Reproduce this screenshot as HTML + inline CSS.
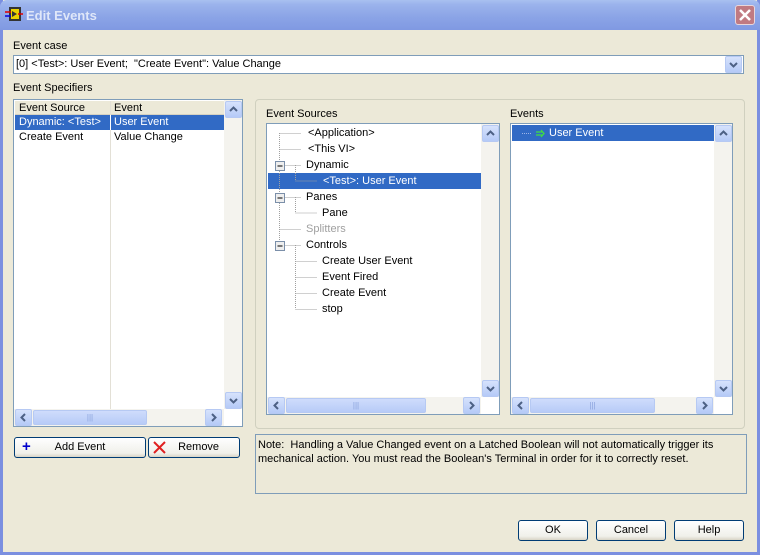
<!DOCTYPE html>
<html><head><meta charset="utf-8"><style>
*{margin:0;padding:0;box-sizing:border-box}
body{width:760px;height:555px;overflow:hidden;font-family:"Liberation Sans",Tahoma,sans-serif;font-size:11px;color:#000;position:relative;background:#ece9d8}
.a{position:absolute}
.frame{left:0;top:0;width:760px;height:555px;background:#ece9d8;border:3px solid #7b8fe0;border-top:none}
.title{left:0;top:0;width:760px;height:30px;background:linear-gradient(#a8c0f0 0%,#9bb3ec 15%,#8aa3e6 60%,#8099e2 100%);border-radius:7px 7px 0 0}
.ttext{left:26px;top:8px;font-size:13px;font-weight:bold;color:#dfe7f9}
.close{left:735px;top:5px;width:20px;height:20px;background:#c07a82;border:1px solid #e8d6da;border-radius:3px}
.box{background:#fff;border:1px solid #7f9db9}
.sel{background:#316ac5;color:#fff}
.sbv{background:#f4f3ee}
.btnS{width:17px;height:17px;background:linear-gradient(#d6e2fc,#b5caf7);border:1px solid #b6c9f3;border-radius:2px}
.btnS svg{position:absolute;left:3px;top:3px}
.thumbH{height:15px;background:linear-gradient(#cfdcfc,#b7cbf7);border:1px solid #b6c9f3;border-radius:2px;color:#8aa2dc;text-align:center;line-height:13px;font-size:8px}
.btn{height:21px;border:1px solid #003c74;border-radius:3px;background:linear-gradient(#fff,#f0f0ea 80%,#d8d4c6);text-align:center;line-height:19px}
.row{height:16px;line-height:16px;white-space:nowrap}
</style></head><body>
<div class="a frame"></div>
<div class="a title"></div>
<svg class="a" style="left:5px;top:5px" width="18" height="18"><rect x="4" y="2" width="12" height="14" fill="#333"/><rect x="6" y="4" width="8" height="10" fill="#e8d000"/><path d="M7 6l5 3-5 3z" fill="#333"/><line x1="0" y1="7" x2="6" y2="7" stroke="#d00" stroke-width="1.5"/><line x1="0" y1="11" x2="6" y2="11" stroke="#00d" stroke-width="1.5"/><line x1="13" y1="9" x2="18" y2="9" stroke="#d00" stroke-width="1.5"/></svg>
<div class="a ttext">Edit Events</div>
<div class="a close"><svg width="18" height="18"><path d="M4 4L14 14M14 4L4 14" stroke="#fff" stroke-width="2.5"/></svg></div>

<div class="a" style="left:13px;top:40px">Event case</div>
<div class="a box" style="left:13px;top:55px;width:731px;height:19px"><div style="padding:2px 0 0 2px">[0] &lt;Test&gt;: User Event;&nbsp; "Create Event": Value Change</div>
<div class="a btnS" style="right:1px;top:0px"><svg width="9" height="9"><path d="M1 3L4.5 6.5L8 3" stroke="#4d6185" stroke-width="2" fill="none"/></svg></div></div>

<div class="a" style="left:13px;top:82px">Event Specifiers</div>
<div class="a box" style="left:13px;top:99px;width:230px;height:328px">
 <div class="a" style="left:1px;top:1px;width:209px;height:14px;background:#ece9d8;border-bottom:1px solid #d6d2c2"></div>
 <div class="a" style="left:96px;top:1px;width:1px;height:308px;background:#e3e0d6"></div>
 <div class="a" style="left:5px;top:1px;line-height:14px">Event Source</div>
 <div class="a" style="left:100px;top:1px;line-height:14px">Event</div>
 <div class="a sel" style="left:1px;top:15px;width:209px;height:15px"></div>
 <div class="a" style="left:96px;top:15px;width:1px;height:15px;background:#fff"></div>
 <div class="a" style="left:5px;top:15px;line-height:15px;color:#fff">Dynamic: &lt;Test&gt;</div>
 <div class="a" style="left:100px;top:15px;line-height:15px;color:#fff">User Event</div>
 <div class="a" style="left:5px;top:30px;line-height:15px">Create Event</div>
 <div class="a" style="left:100px;top:30px;line-height:15px">Value Change</div>
 <div class="a sbv" style="left:210px;top:0;width:18px;height:309px"></div>
 <div class="a btnS" style="left:211px;top:1px"><svg width="9" height="9"><path d="M1 6L4.5 2.5L8 6" stroke="#4d6185" stroke-width="2" fill="none"/></svg></div>
 <div class="a btnS" style="left:211px;top:292px"><svg width="9" height="9"><path d="M1 3L4.5 6.5L8 3" stroke="#4d6185" stroke-width="2" fill="none"/></svg></div>
 <div class="a sbv" style="left:0;top:309px;width:210px;height:17px"></div>
 <div class="a btnS" style="left:1px;top:309px"><svg width="9" height="9"><path d="M6 1L2.5 4.5L6 8" stroke="#4d6185" stroke-width="2" fill="none"/></svg></div>
 <div class="a thumbH" style="left:19px;top:310px;width:114px">|||</div>
 <div class="a btnS" style="left:191px;top:309px"><svg width="9" height="9"><path d="M3 1L6.5 4.5L3 8" stroke="#4d6185" stroke-width="2" fill="none"/></svg></div>
</div>

<div class="a btn" style="left:14px;top:437px;width:132px"><span class="a" style="left:7px;top:-1px;color:#00c;font-size:15px;font-weight:bold">+</span>Add Event</div>
<div class="a btn" style="left:148px;top:437px;width:92px"><svg class="a" style="left:4px;top:3px" width="13" height="13"><path d="M1 1L12 12M12 1L1 12" stroke="#e02020" stroke-width="2"/></svg>&nbsp;&nbsp;&nbsp;Remove</div>

<div class="a" style="left:255px;top:99px;width:490px;height:330px;border:1px solid #d0d0bf;border-radius:4px"></div>
<div class="a" style="left:266px;top:108px">Event Sources</div>
<div class="a box" style="left:266px;top:123px;width:234px;height:292px">
 <div class="a sel" style="left:1px;top:49px;width:213px;height:16px"></div>
 <svg class="a" style="left:0;top:0" width="215" height="200"><g stroke="#a0a0a0" stroke-dasharray="1,1" fill="none">
 <path d="M12.5 9V121M12.5 9.5H34M12.5 25.5H34M12.5 41.5H34M12.5 73.5H34M12.5 105.5H34M12.5 121.5H34M28.5 41V57H50M28.5 73V89H50M28.5 121V185M28.5 137.5H50M28.5 153.5H50M28.5 169.5H50M28.5 185.5H50"/></g>
 <g><rect x="8.5" y="37.5" width="9" height="9" fill="#eee" stroke="#7b8fa9"/><path d="M10.5 42H15.5" stroke="#000"/>
 <rect x="8.5" y="69.5" width="9" height="9" fill="#eee" stroke="#7b8fa9"/><path d="M10.5 74H15.5" stroke="#000"/>
 <rect x="8.5" y="117.5" width="9" height="9" fill="#eee" stroke="#7b8fa9"/><path d="M10.5 122H15.5" stroke="#000"/></g></svg>
 <div class="a row" style="left:41px;top:1px">&lt;Application&gt;</div>
 <div class="a row" style="left:41px;top:17px">&lt;This VI&gt;</div>
 <div class="a row" style="left:39px;top:33px">Dynamic</div>
 <div class="a row" style="left:56px;top:49px;color:#fff">&lt;Test&gt;: User Event</div>
 <div class="a row" style="left:39px;top:65px">Panes</div>
 <div class="a row" style="left:55px;top:81px">Pane</div>
 <div class="a row" style="left:39px;top:97px;color:#a0a0a0">Splitters</div>
 <div class="a row" style="left:39px;top:113px">Controls</div>
 <div class="a row" style="left:55px;top:129px">Create User Event</div>
 <div class="a row" style="left:55px;top:145px">Event Fired</div>
 <div class="a row" style="left:55px;top:161px">Create Event</div>
 <div class="a row" style="left:55px;top:177px">stop</div>
 <div class="a sbv" style="left:214px;top:0;width:18px;height:273px"></div>
 <div class="a btnS" style="left:215px;top:1px"><svg width="9" height="9"><path d="M1 6L4.5 2.5L8 6" stroke="#4d6185" stroke-width="2" fill="none"/></svg></div>
 <div class="a btnS" style="left:215px;top:256px"><svg width="9" height="9"><path d="M1 3L4.5 6.5L8 3" stroke="#4d6185" stroke-width="2" fill="none"/></svg></div>
 <div class="a sbv" style="left:0;top:273px;width:214px;height:17px"></div>
 <div class="a btnS" style="left:1px;top:273px"><svg width="9" height="9"><path d="M6 1L2.5 4.5L6 8" stroke="#4d6185" stroke-width="2" fill="none"/></svg></div>
 <div class="a thumbH" style="left:19px;top:274px;width:140px">|||</div>
 <div class="a btnS" style="left:196px;top:273px"><svg width="9" height="9"><path d="M3 1L6.5 4.5L3 8" stroke="#4d6185" stroke-width="2" fill="none"/></svg></div>
</div>

<div class="a" style="left:510px;top:108px">Events</div>
<div class="a box" style="left:510px;top:123px;width:223px;height:292px">
 <div class="a sel" style="left:1px;top:1px;width:202px;height:16px"></div>
 <svg class="a" style="left:10px;top:1px" width="30" height="16"><path d="M1 8.5H11" stroke="#9db5e8" stroke-dasharray="1,1"/><path d="M15 7H22M15 10H22M20 5L23 8.5L20 12" stroke="#40e040" stroke-width="1.3" fill="none"/></svg>
 <div class="a row" style="left:38px;top:1px;color:#fff">User Event</div>
 <div class="a sbv" style="left:203px;top:0;width:18px;height:273px"></div>
 <div class="a btnS" style="left:204px;top:1px"><svg width="9" height="9"><path d="M1 6L4.5 2.5L8 6" stroke="#4d6185" stroke-width="2" fill="none"/></svg></div>
 <div class="a btnS" style="left:204px;top:256px"><svg width="9" height="9"><path d="M1 3L4.5 6.5L8 3" stroke="#4d6185" stroke-width="2" fill="none"/></svg></div>
 <div class="a sbv" style="left:0;top:273px;width:203px;height:17px"></div>
 <div class="a btnS" style="left:1px;top:273px"><svg width="9" height="9"><path d="M6 1L2.5 4.5L6 8" stroke="#4d6185" stroke-width="2" fill="none"/></svg></div>
 <div class="a thumbH" style="left:19px;top:274px;width:125px">|||</div>
 <div class="a btnS" style="left:185px;top:273px"><svg width="9" height="9"><path d="M3 1L6.5 4.5L3 8" stroke="#4d6185" stroke-width="2" fill="none"/></svg></div>
</div>

<div class="a" style="left:255px;top:434px;width:492px;height:60px;border:1px solid #7f9db9;padding:3px 2px;line-height:14px">Note:&nbsp; Handling a Value Changed event on a Latched Boolean will not automatically trigger its mechanical action. You must read the Boolean's Terminal in order for it to correctly reset.</div>

<div class="a btn" style="left:518px;top:520px;width:70px">OK</div>
<div class="a btn" style="left:596px;top:520px;width:70px">Cancel</div>
<div class="a btn" style="left:674px;top:520px;width:70px">Help</div>
</body></html>
